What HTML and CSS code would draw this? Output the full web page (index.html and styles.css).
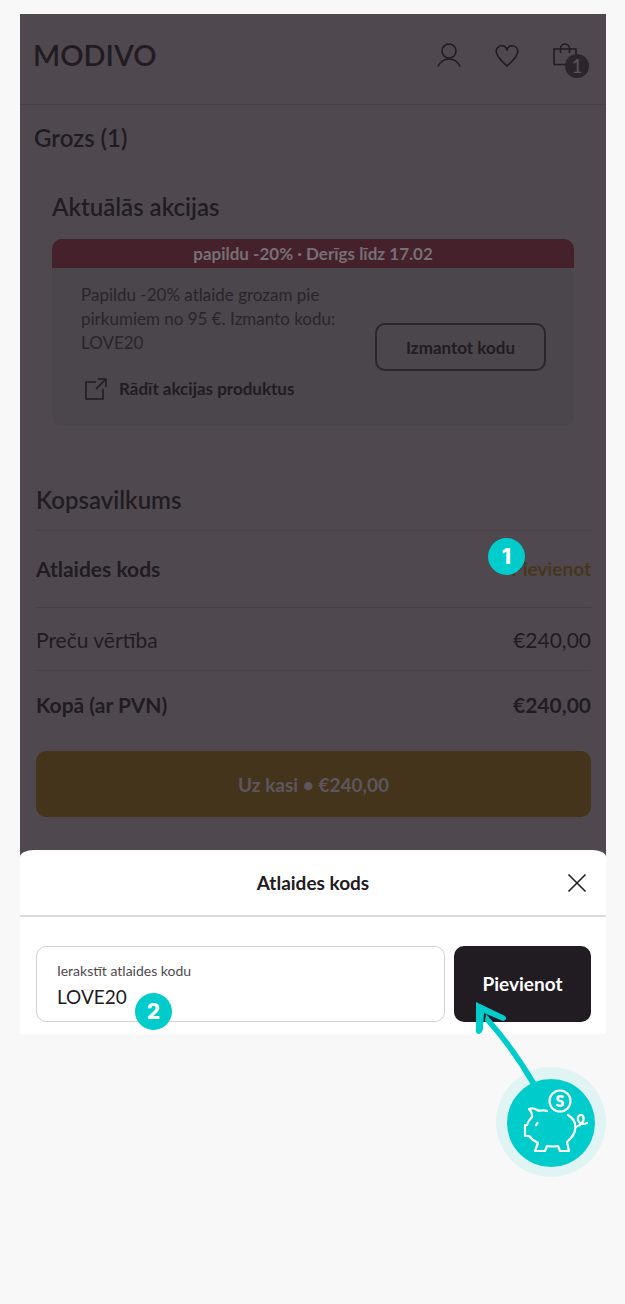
FILE: index.html
```
<!DOCTYPE html>
<html lang="lv">
<head>
  <meta charset="UTF-8" />
  <meta name="viewport" content="width=device-width, initial-scale=1.0"/>
  <title>Modivo - Grozs</title>
  <link rel="stylesheet" href="styles.css">
</head>
<body>

  <div class="phone">
    <div class="cart">
      <header class="header">
        <a class="logo" href="#">MODIVO</a>
        <nav class="nav">
          <a href="#" aria-label="Profils">
            <svg width="24" height="24" viewBox="0 0 24 24"><circle cx="12" cy="8" r="7"/><path d="M1 23.500C3 19 7 16 12 16s9 3 11 7.500"/></svg>
          </a>
          <a href="#" aria-label="Vēlmes">
            <svg width="24" height="24" viewBox="0 0 24 24"><path d="M12 23C7 18.500 1.200 13.500 1.200 8.500 1.200 5 3.800 2.800 6.800 2.800 9.500 2.800 11.500 4.500 12 7.500 12.500 4.500 14.500 2.800 17.200 2.800c3 0 5.600 2.200 5.600 5.700C22.800 13.500 17 18.500 12 23z"/></svg>
          </a>
          <a class="bag" href="#" aria-label="Grozs">
            <svg width="24" height="24" viewBox="0 0 24 24"><path d="M1 6h22v15.500H1zM7.500 10V5.500a4.500 4.500 0 0 1 9 0V10"/></svg>
            <span class="bag-count">1</span>
          </a>
        </nav>
      </header>

      <h1 class="page-title">Grozs (1)</h1>

      <section class="promo">
        <h2>Aktuālās akcijas</h2>
        <div class="promo-card">
          <div class="promo-banner">papildu -20% · Derīgs līdz 17.02</div>
          <div class="promo-body">
            <div class="promo-info">
              <p>Papildu -20% atlaide grozam pie pirkumiem no 95 €. Izmanto kodu: LOVE20</p>
              <a class="promo-link" href="#">
                <svg width="24" height="24" viewBox="0 0 24 24"><path d="M12 5H2v17h17V12M14 2h8v8M22 2L12 12"/></svg>
                Rādīt akcijas produktus
              </a>
            </div>
            <button class="use-code">Izmantot kodu</button>
          </div>
        </div>
      </section>

      <section class="summary">
        <h2>Kopsavilkums</h2>
        <div class="row row-code">
          <span>Atlaides kods</span>
          <button class="add-link">Pievienot</button>
          <span class="step step-one">1</span>
        </div>
        <div class="row row-value">
          <span>Preču vērtība</span>
          <span>€240,00</span>
        </div>
        <div class="row row-total">
          <span>Kopā (ar PVN)</span>
          <span>€240,00</span>
        </div>
        <button class="checkout">Uz kasi • €240,00</button>
      </section>
    </div>

    <div class="sheet">
      <div class="sheet-head">
        <h2>Atlaides kods</h2>
        <button class="close" aria-label="Aizvērt">
          <svg width="20" height="20" viewBox="0 0 20 20"><path d="M1.500 1.500l17 17M18.500 1.500l-17 17"/></svg>
        </button>
      </div>
      <form class="code-form">
        <div class="field">
          <label for="code">Ierakstīt atlaides kodu</label>
          <input type="text" id="code" value="LOVE20">
          <span class="step step-two">2</span>
        </div>
        <button class="submit" type="button">Pievienot</button>
      </form>
    </div>

    <!-- arrow + piggy bank -->
    <svg class="piggy" width="156" height="200" viewBox="0 0 156 200">
      <circle cx="101" cy="142" r="55" fill="#e0f4f4"/>
      <circle cx="101" cy="143" r="44" fill="#00cccc"/>
      <g fill="#00cccc">
        <path d="M26 22L55 36Q58 40 53 41L34 33L33 49Q32 54 28 54Q25 53 26 48Z"/>
        <path d="M36 34Q63 63 86 102L81 105Q61 70 35 41Z"/>
      </g>
      <g fill="none" stroke="#fff" stroke-width="2.200" stroke-linecap="round" stroke-linejoin="round">
        <path d="M97 131C93 129 90 132 87 130C84 128 82 128 79 129Q83 134 82 137Q78 141 77 145H75V156H79Q82 160 88 163L85 171H95L97 166Q103 167 108 166L110 171H119L117 162C128 153 128 141 118 135"/>
        <path d="M86 145l1.500-2"/>
        <path d="M126 147C132 145 135 140 133 136C131 133 127 136 128 140C129 144 133 145 137 143"/>
        <circle cx="110" cy="121" r="10.500"/>
      </g>
      <text x="110" y="127" class="coin">S</text>
    </svg>
  </div>

</body>
</html>
```
FILE: styles.css
```
* {
  box-sizing: border-box;
}
body {
  margin: 0;
  min-height: 100vh;
  padding: 14px 19px 0 20px;
  background: #f8f8f8;
  color: #211b22;
  font-family: Lato, sans-serif;
  font-size: 19px;
}
h1, h2, p {
  margin: 0;
}
h1, h2 {
  font-size: 24px;
  line-height: 32px;
  font-weight: 600;
}
a {
  color: inherit;
  text-decoration: none;
}
button {
  font-family: inherit;
  color: inherit;
  padding: 0;
  border: none;
  background: none;
  cursor: pointer;
}
svg {
  display: block;
  fill: none;
  stroke: #211b22;
  stroke-width: 1.6;
}
.phone {
  position: relative;
  padding-bottom: 146px;
}
.cart {
  background: #4f494f;
  padding-bottom: 48px;
}

/* header */
.header {
  display: flex;
  justify-content: space-between;
  align-items: center;
  height: 91px;
  padding: 0 29px 8px 13px;
  border-bottom: 1px solid #484248;
}
.logo {
  font-size: 29px;
  line-height: 40px;
  font-weight: 600;
}
.nav {
  display: flex;
  gap: 34px;
}
.bag {
  position: relative;
}
.bag-count {
  position: absolute;
  left: 12px;
  top: 11px;
  width: 24px;
  height: 24px;
  border-radius: 50%;
  background: #2c262c;
  color: #5a545a;
  font-size: 19px;
  line-height: 24px;
  text-align: center;
}
.page-title {
  padding: 17px 14px 0;
}

/* promo */
.promo {
  padding: 37px 32px 0;
}
.promo-card {
  margin-top: 16px;
  border-radius: 10px;
  background: #4b464b;
  overflow: hidden;
}
.promo-banner {
  background: #45212b;
  color: #767076;
  font-size: 17px;
  line-height: 29px;
  font-weight: 700;
  text-align: center;
}
.promo-body {
  display: flex;
  justify-content: space-between;
  align-items: center;
  padding: 15px 28px 25px 29px;
}
.promo-info {
  width: 264px;
  font-size: 17px;
  line-height: 24px;
}
.promo-info p {
  color: #2a242a;
}
.promo-link {
  display: flex;
  align-items: center;
  gap: 11px;
  margin-top: 22px;
  padding-left: 3px;
  font-weight: 700;
}
.use-code {
  width: 171px;
  height: 48px;
  margin-top: 10px;
  border: 2px solid #2c262c;
  border-radius: 10px;
  font-size: 17px;
  font-weight: 700;
}

/* summary */
.summary {
  padding: 58px 15px 0 16px;
}
.summary h2 {
  padding-bottom: 14px;
}
.row {
  position: relative;
  display: flex;
  justify-content: space-between;
  align-items: center;
  border-top: 1px solid #484248;
  font-size: 21px;
}
.row-code {
  height: 77px;
  padding-bottom: 2px;
  font-weight: 700;
}
.row-value {
  height: 63px;
}
.row-total {
  height: 81px;
  padding-bottom: 14px;
  font-weight: 700;
}
.add-link {
  color: #46371c;
  font-size: 19px;
  font-weight: 700;
}
.checkout {
  width: 100%;
  height: 66px;
  border-radius: 10px;
  background: #43341b;
  color: #5e565e;
  font-size: 19px;
  font-weight: 700;
}
.step {
  position: absolute;
  width: 37px;
  height: 37px;
  border-radius: 50%;
  background: #00cccc;
  color: #fff;
  font-family: Inter, sans-serif;
  font-size: 21px;
  line-height: 37px;
  font-weight: 800;
  text-align: center;
}
.step-one {
  right: 66px;
  top: 7px;
}
.step-two {
  left: 98px;
  top: 46px;
}

/* bottom sheet */
.sheet {
  margin-top: -15px;
  border-radius: 14px 14px 0 0 / 7px 7px 0 0;
  background: #fff;
}
.sheet-head {
  position: relative;
  display: flex;
  justify-content: center;
  align-items: center;
  height: 67px;
  border-bottom: 2px solid #dcdadd;
}
.sheet-head h2 {
  font-size: 19px;
  font-weight: 700;
}
.close {
  position: absolute;
  right: 19px;
}
.code-form {
  display: flex;
  gap: 9px;
  padding: 29px 15px 12px 16px;
}
.field {
  position: relative;
  flex: 1;
  height: 76px;
  padding: 13px 20px;
  border: 1px solid #d4d1d6;
  border-radius: 10px;
}
.field label {
  display: block;
  color: #4f494f;
  font-size: 14px;
  line-height: 22px;
}
.field input {
  display: block;
  width: 100%;
  height: 28px;
  padding: 0;
  border: none;
  outline: none;
  background: none;
  color: #211b22;
  font-family: inherit;
  font-size: 19px;
}
.submit {
  width: 137px;
  height: 76px;
  padding-bottom: 2px;
  border-radius: 10px;
  background: #211b22;
  color: #fff;
  font-size: 19px;
  font-weight: 700;
}

.piggy {
  position: absolute;
  right: 0;
  bottom: 0;
  stroke: none;
}
.coin {
  fill: #fff;
  font-size: 16px;
  font-weight: 800;
  text-anchor: middle;
}
```
